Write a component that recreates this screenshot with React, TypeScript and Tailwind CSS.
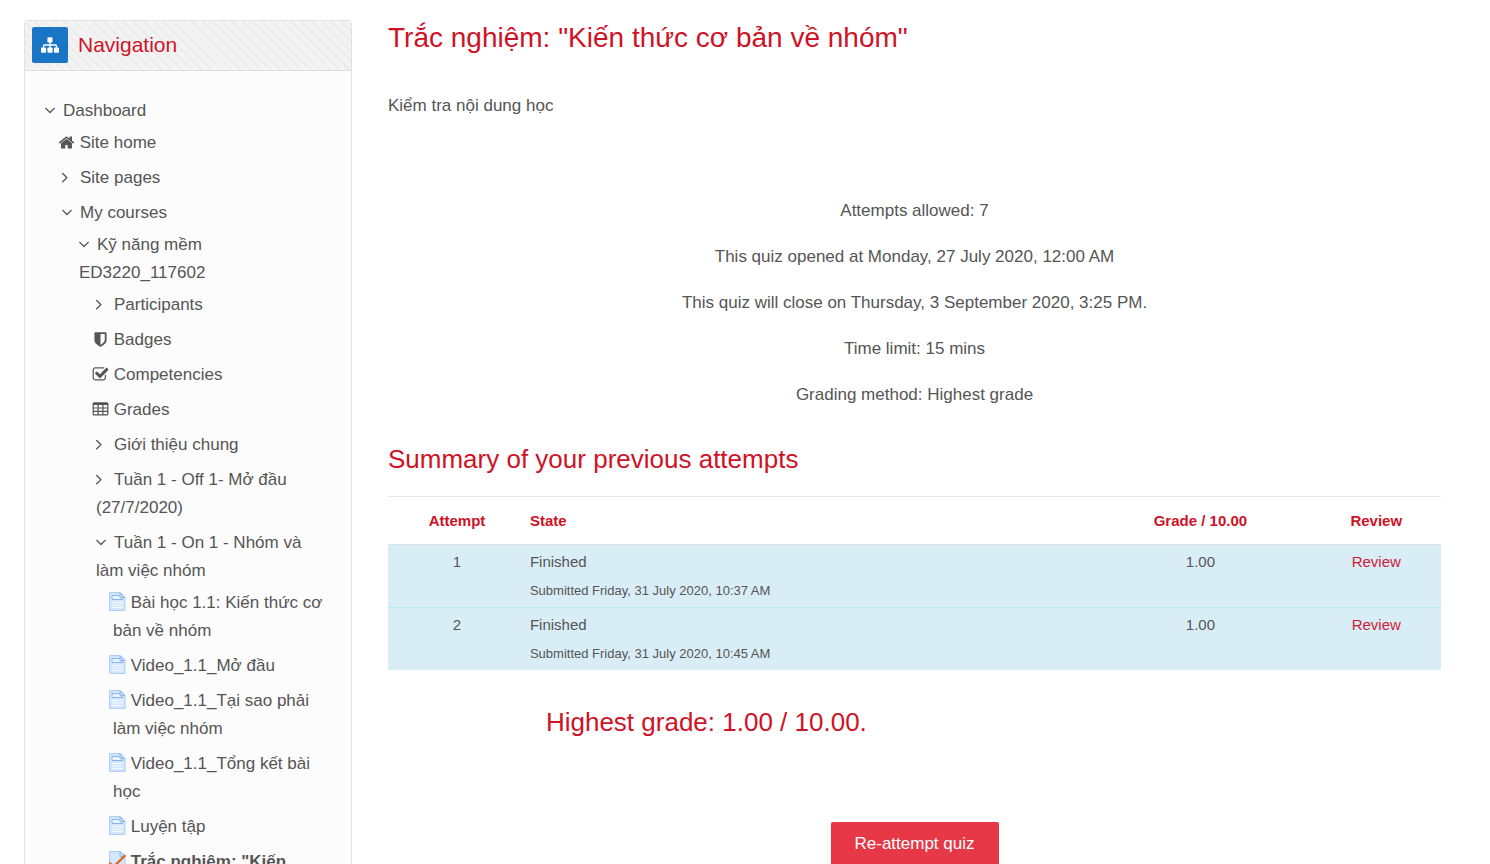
import React, { useState } from "react";

const paths = {
  home: "M1472 992v480q0 26-19 45t-45 19h-384v-384h-256v384h-384q-26 0-45-19t-19-45v-480q0-1 .5-3t.5-3l575-474 575 474q1 2 1 6zm223-69l-62 74q-8 9-21 11h-3q-13 0-21-7l-692-577-692 577q-12 8-24 7-13-2-21-11l-62-74q-8-10-7-23.5t11-21.5l719-599q32-26 76-26t76 26l244 204v-195q0-14 9-23t23-9h192q14 0 23 9t9 23v408l219 182q10 8 11 21.5t-7 23.5z",
  down: "M1395 736q0 13-10 23l-466 466q-10 10-23 10t-23-10l-466-466q-10-10-10-23t10-23l50-50q10-10 23-10t23 10l393 393 393-393q10-10 23-10t23 10l50 50q10 10 10 23z",
  right:
    "M1171 960q0 13-10 23l-466 466q-10 10-23 10t-23-10l-50-50q-10-10-10-23t10-23l393-393-393-393q-10-10-10-23t10-23l50-50q10-10 23-10t23 10l466 466q10 10 10 23z",
  check:
    "M1472 930v318q0 119-84.5 203.5t-203.5 84.5h-832q-119 0-203.5-84.5t-84.5-203.5v-832q0-119 84.5-203.5t203.5-84.5h832q63 0 117 25 15 7 18 23 3 17-9 29l-49 49q-10 10-23 10-3 0-9-2-23-6-45-6h-832q-66 0-113 47t-47 113v832q0 66 47 113t113 47h832q66 0 113-47t47-113v-254q0-13 9-22l64-64q10-10 23-10 6 0 12 3 20 8 20 29zm231-489l-814 814q-24 24-57 24t-57-24l-430-430q-24-24-24-57t24-57l110-110q24-24 57-24t57 24l263 263 647-647q24-24 57-24t57 24l110 110q24 24 24 57t-24 57z",
  shield:
    "M1344 960v-640h-448v1137q119-63 213-137 235-184 235-360zm192-768v768q0 86-33.5 170.5t-83 150-118 127.5-126.5 103-121 77.5-89.5 49.5-42.5 20q-12 6-26 6t-26-6q-16-7-42.5-20t-89.5-49.5-121-77.5-126.5-103-118-127.5-83-150-33.5-170.5v-768q0-26 19-45t45-19h1152q26 0 45 19t19 45z",
  table:
    "M224 128h1344q66 0 113 47t47 113v1088q0 66-47 113t-113 47h-1344q-66 0-113-47t-47-113v-1088q0-66 47-113t113-47zM192 416v256h384v-256zM704 416v256h384v-256zM1216 416v256h384v-256zM192 800v224h384v-224zM704 800v224h384v-224zM1216 800v224h384v-224zM192 1152v256h384v-256zM704 1152v256h384v-256zM1216 1152v256h384v-256z",
  sitemap:
    "M1792 1248v320q0 40-28 68t-68 28h-320q-40 0-68-28t-28-68v-320q0-40 28-68t68-28h96v-192h-512v192h96q40 0 68 28t28 68v320q0 40-28 68t-68 28h-320q-40 0-68-28t-28-68v-320q0-40 28-68t68-28h96v-192h-512v192h96q40 0 68 28t28 68v320q0 40-28 68t-68 28h-320q-40 0-68-28t-28-68v-320q0-40 28-68t68-28h96v-192q0-52 38-90t90-38h512v-192h-96q-40 0-68-28t-28-68v-320q0-40 28-68t68-28h320q40 0 68 28t28 68v320q0 40-28 68t-68 28h-96v192h512q52 0 90 38t38 90v192h96q40 0 68 28t28 68z",
};

function Icon({
  name,
  className,
}: {
  name: keyof typeof paths;
  className: string;
}) {
  return (
    <svg
      viewBox="0 0 1792 1792"
      fill="currentColor"
      fillRule="evenodd"
      className={className}
    >
      <path d={paths[name]} />
    </svg>
  );
}

function PageIcon({ quiz }: { quiz?: boolean }) {
  return (
    <svg viewBox="0 0 17 19" className="inline-block h-[19px] w-[17px] align-[-3px]">
      <path
        d="M.6.6h10.4l5 5v12.8H.6z"
        fill="#d3e8fd"
        stroke="#a9cbf6"
        strokeWidth="1"
      />
      <path d="M11 .6v5h5z" fill="#c3dcfb" stroke="#86b4f0" strokeWidth="1" />
      {quiz ? (
        <path
          d="M0 11.5l4.5 4.5L16.5 4"
          fill="none"
          stroke="#dd6a2c"
          strokeWidth="2.4"
        />
      ) : (
        <>
          <path
            d="M3 3.5h6.5l4.5 4H3z"
            fill="#eaf4fe"
            stroke="#86b4f0"
            strokeWidth="1"
          />
          <path
            d="M3 10.5h10.5M3 13h10.5M3 15.5h10.5"
            stroke="#f4faff"
            strokeWidth="1.2"
          />
        </>
      )}
    </svg>
  );
}

function Leaf({
  icon,
  label,
  bold,
}: {
  icon: React.ReactNode;
  label: string;
  bold?: boolean;
}) {
  return (
    <li>
      <a href="#" className={`block -indent-1 ${bold ? "font-bold" : ""}`}>
        {icon} {label}
      </a>
    </li>
  );
}

function Branch({
  label,
  children,
}: {
  label: string;
  children?: React.ReactNode;
}) {
  const [open, setOpen] = useState(!!children);
  return (
    <li>
      <button
        type="button"
        aria-expanded={open}
        onClick={() => setOpen(!open)}
        className="block w-full cursor-pointer text-left"
      >
        <span className="inline-block w-[18px]">
          <Icon
            name={open ? "down" : "right"}
            className={`inline-block size-[18px] align-[-3px] ${open ? "-ml-1" : "-ml-1.5"}`}
          />
        </span>
        {label}
      </button>
      {open && children && (
        <ul className="mt-1 space-y-[7px] pl-[17px]">{children}</ul>
      )}
    </li>
  );
}

const small = "inline-block size-[17px] align-[-3px]";

function Navigation() {
  return (
    <nav className="w-[328px] shrink-0 rounded-sm border border-[#e1e1e1] bg-[#fcfcfc]">
      <div className="flex h-[50px] items-center border-b border-[#dddddd] bg-[#f3f3f3] bg-[repeating-linear-gradient(45deg,transparent_0px,transparent_5px,#ececec_5px,#ececec_7px)] px-[7px] pb-px">
        <div className="flex size-9 items-center justify-center rounded-xs bg-[#1a75c4] text-white">
          <Icon name="sitemap" className="size-[18px]" />
        </div>
        <h2 className="ml-2.5 text-[21px] text-[#d0142a]">Navigation</h2>
      </div>
      <ul className="px-5 pt-[26px] pb-5 text-[17px] leading-7">
        <Branch label="Dashboard">
          <Leaf icon={<Icon name="home" className={small} />} label="Site home" />
          <Branch label="Site pages" />
          <Branch label="My courses">
            <Branch label="Kỹ năng mềm ED3220_117602">
              <Branch label="Participants" />
              <Leaf icon={<Icon name="shield" className={small} />} label="Badges" />
              <Leaf
                icon={<Icon name="check" className={small} />}
                label="Competencies"
              />
              <Leaf icon={<Icon name="table" className={small} />} label="Grades" />
              <Branch label="Giới thiệu chung" />
              <Branch label="Tuần 1 - Off 1- Mở đầu (27/7/2020)" />
              <Branch label="Tuần 1 - On 1 - Nhóm và làm việc nhóm">
                <Leaf icon={<PageIcon />} label="Bài học 1.1: Kiến thức cơ bản về nhóm" />
                <Leaf icon={<PageIcon />} label="Video_1.1_Mở đầu" />
                <Leaf icon={<PageIcon />} label="Video_1.1_Tại sao phải làm việc nhóm" />
                <Leaf icon={<PageIcon />} label="Video_1.1_Tổng kết bài học" />
                <Leaf icon={<PageIcon />} label="Luyện tập" />
                <Leaf icon={<PageIcon quiz />} label={'Trắc nghiệm: "Kiến'} bold />
              </Branch>
            </Branch>
          </Branch>
        </Branch>
      </ul>
    </nav>
  );
}

const info = [
  "Attempts allowed: 7",
  "This quiz opened at Monday, 27 July 2020, 12:00 AM",
  "This quiz will close on Thursday, 3 September 2020, 3:25 PM.",
  "Time limit: 15 mins",
  "Grading method: Highest grade",
];

const attempts = [
  { id: 1, time: "Friday, 31 July 2020, 10:37 AM", grade: "1.00" },
  { id: 2, time: "Friday, 31 July 2020, 10:45 AM", grade: "1.00" },
];

export default function App() {
  return (
    <div className="flex h-screen items-start gap-9 overflow-hidden bg-white pt-5 pr-[49px] pl-6 font-['Liberation_Sans',Arial,sans-serif] text-[#555555]">
      <Navigation />
      <main className="min-w-0 flex-1 text-[17px] leading-7">
        <h1 className="text-[28px] leading-9 text-[#cf1226]">
          Trắc nghiệm: "Kiến thức cơ bản về nhóm"
        </h1>
        <p className="mt-9">Kiểm tra nội dung học</p>
        <div className="mt-[77px] space-y-[18px] text-center">
          {info.map((line) => (
            <p key={line}>{line}</p>
          ))}
        </div>
        <h2 className="mt-8 text-[26px] leading-9 text-[#cf1226]">
          Summary of your previous attempts
        </h2>
        <table className="mt-[19px] w-full table-fixed border-collapse">
          <thead>
            <tr className="h-12 border-t border-b border-t-[#e3e6ea] border-b-[#d9dfe3] text-[15px] text-[#cf1226]">
              <th className="w-[13.1%]">Attempt</th>
              <th className="pl-1 text-left">State</th>
              <th className="w-[21.1%]">Grade / 10.00</th>
              <th className="w-[12.3%]">Review</th>
            </tr>
          </thead>
          <tbody className="bg-[#d9edf7] text-center text-[15px]">
            {attempts.map((a) => (
              <tr
                key={a.id}
                className="border-t border-t-[#bce8f1] align-top first:border-t-[#d9dfe3]"
              >
                <td className="pt-[3px]">{a.id}</td>
                <td className="pt-[3px] pb-px pl-1 text-left">
                  Finished
                  <span className="block text-[13px] leading-[30px]">
                    Submitted {a.time}
                  </span>
                </td>
                <td className="pt-[3px]">{a.grade}</td>
                <td className="pt-[3px]">
                  <a href="#" className="text-[#cf1a35]">
                    Review
                  </a>
                </td>
              </tr>
            ))}
          </tbody>
        </table>
        <h2 className="mt-[34px] ml-[15%] text-[26px] leading-9 text-[#cf1226]">
          Highest grade: 1.00 / 10.00.
        </h2>
        <div className="mt-[82px] flex justify-center">
          <button
            type="button"
            className="cursor-pointer rounded-xs bg-[#e63846] px-6 py-2 text-white"
          >
            Re-attempt quiz
          </button>
        </div>
      </main>
    </div>
  );
}
